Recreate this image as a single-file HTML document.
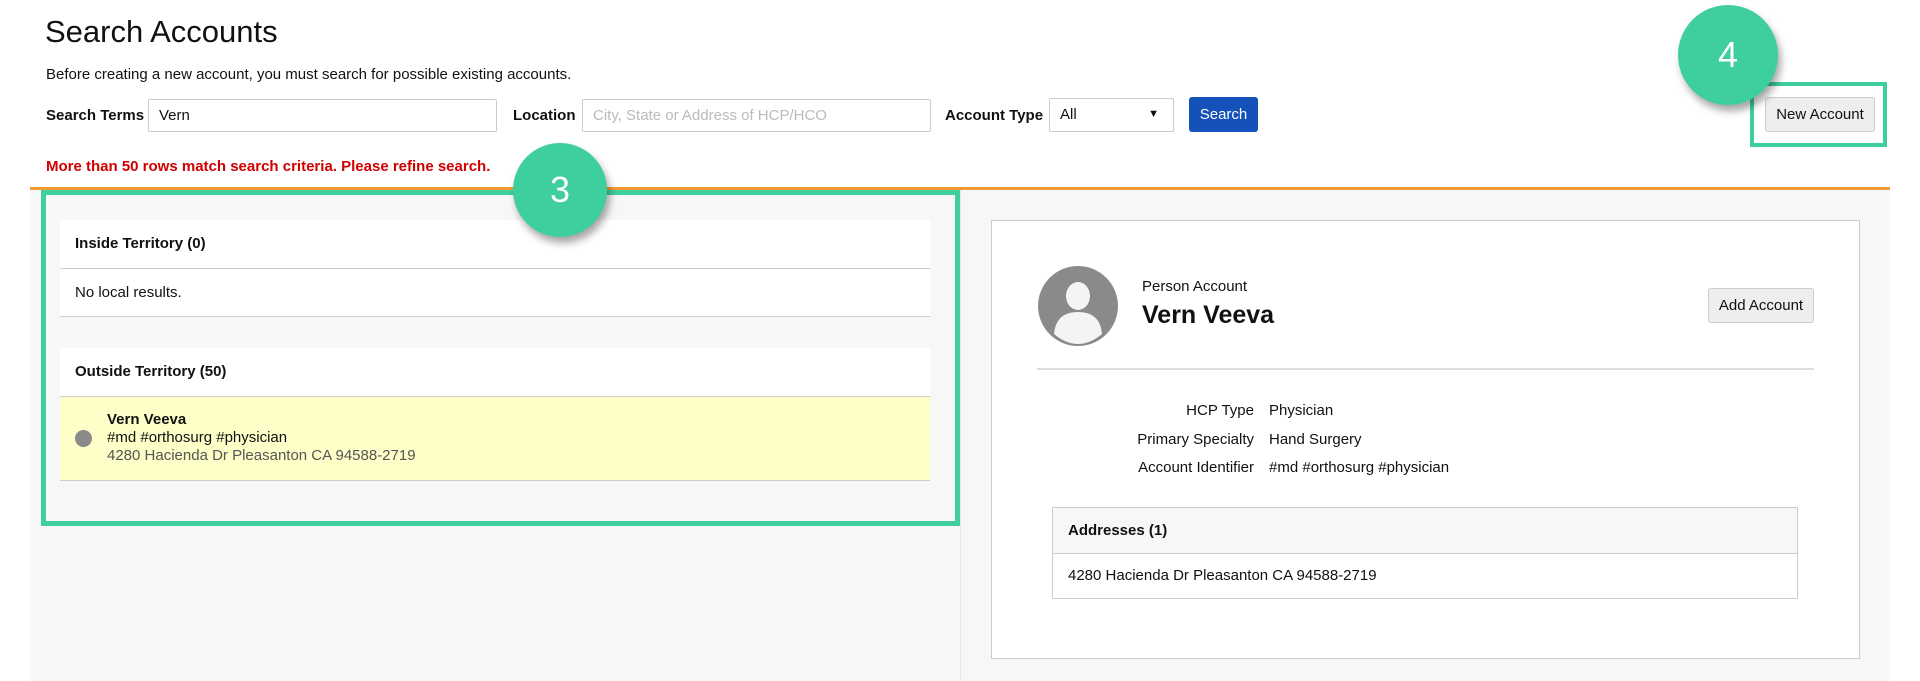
<!DOCTYPE html>
<html><head><style>
*{box-sizing:border-box;margin:0;padding:0}
body{width:1920px;height:681px;background:#fff;font-family:"Liberation Sans",Arial,sans-serif;color:#111;position:relative;overflow:hidden;font-size:15px}
.a{position:absolute}
.lbl{font-weight:bold;font-size:15px;line-height:33px}
.inp{border:1px solid #ccc;border-radius:2px;height:33px;line-height:31px;padding-left:10px;font-size:15px;background:#fff}
.circ{border-radius:50%;background:#3fcf9c;color:#fff;text-align:center;box-shadow:3px 6px 8px rgba(0,0,0,.35);font-size:36px}
.pan{background:#fff}
.row{border-bottom:1px solid #ccc}
</style></head><body>
<div class="a" style="left:45px;top:14px;font-size:31px;line-height:36px">Search Accounts</div>
<div class="a" style="left:46px;top:66px;font-size:15px;line-height:18px">Before creating a new account, you must search for possible existing accounts.</div>
<div class="a lbl" style="left:46px;top:99px">Search Terms</div>
<div class="a inp" style="left:148px;top:99px;width:349px">Vern</div>
<div class="a lbl" style="left:513px;top:99px">Location</div>
<div class="a inp" style="left:582px;top:99px;width:349px;color:#bbb">City, State or Address of HCP/HCO</div>
<div class="a lbl" style="left:945px;top:99px">Account Type</div>
<div class="a inp" style="left:1049px;top:98px;width:125px;height:34px">All<span style="position:absolute;right:14px;top:0;font-size:11px">&#9660;</span></div>
<div class="a" style="left:1189px;top:97px;width:69px;height:35px;background:#1451b8;border-radius:3px;color:#fff;text-align:center;line-height:35px;font-size:15px">Search</div>
<div class="a" style="left:1750px;top:82px;width:137px;height:65px;border:4px solid #3fcf9c"></div>
<div class="a" style="left:1765px;top:97px;width:110px;height:35px;background:#eee;border:1px solid #ccc;border-radius:3px;text-align:center;line-height:33px">New Account</div>
<div class="a circ" style="left:1678px;top:5px;width:100px;height:100px;line-height:100px">4</div>
<div class="a" style="left:46px;top:157px;color:#d00000;font-weight:bold;line-height:20px">More than 50 rows match search criteria. Please refine search.</div>
<div class="a" style="left:30px;top:187px;width:1860px;height:3px;background:#f39a36"></div>
<div class="a" style="left:30px;top:190px;width:1860px;height:491px;background:#f7f7f7"></div>
<div class="a" style="left:960px;top:190px;width:1px;height:491px;background:#e6e6e6"></div>
<div class="a pan" style="left:60px;top:220px;width:870px;height:97px">
 <div class="row" style="height:49px;line-height:48px;padding-left:15px;font-weight:bold">Inside Territory (0)</div>
 <div class="row" style="height:48px;line-height:47px;padding-left:15px">No local results.</div>
</div>
<div class="a pan" style="left:60px;top:348px;width:870px;height:133px">
 <div class="row" style="height:49px;line-height:48px;padding-left:15px;font-weight:bold">Outside Territory (50)</div>
 <div class="row" style="height:84px;background:#fefec8;position:relative">
  <div class="a" style="left:15px;top:33px;width:17px;height:17px;border-radius:50%;background:#8a8a8a"></div>
  <div class="a" style="left:47px;top:14px;line-height:18px"><b>Vern Veeva</b><br>#md #orthosurg #physician<br><span style="color:#555">4280 Hacienda Dr Pleasanton CA 94588-2719</span></div>
 </div>
</div>
<div class="a" style="left:41px;top:190px;width:919px;height:336px;border:5px solid #3fcf9c"></div>
<div class="a circ" style="left:513px;top:143px;width:94px;height:94px;line-height:94px">3</div>
<div class="a" style="left:991px;top:220px;width:869px;height:439px;background:#fff;border:1px solid #ccc"></div>
<svg class="a" style="left:1038px;top:266px" width="80" height="80" viewBox="0 0 80 80"><circle cx="40" cy="40" r="40" fill="#8a8a8a"/><ellipse cx="40" cy="30" rx="12" ry="14" fill="#f4f4f4"/><path d="M16 68 Q18 46 40 46 Q62 46 64 68 Q52 78 40 78 Q28 78 16 68Z" fill="#f4f4f4"/></svg>
<div class="a" style="left:1142px;top:278px;line-height:18px">Person Account</div>
<div class="a" style="left:1142px;top:300px;font-size:25px;font-weight:bold;line-height:30px">Vern Veeva</div>
<div class="a" style="left:1708px;top:288px;width:106px;height:35px;background:#eee;border:1px solid #ccc;border-radius:3px;text-align:center;line-height:33px">Add Account</div>
<div class="a" style="left:1037px;top:368px;width:777px;height:2px;background:#ddd"></div>
<div class="a" style="left:1054px;top:397px;width:200px;text-align:right;line-height:28.5px">HCP Type<br>Primary Specialty<br>Account Identifier</div>
<div class="a" style="left:1269px;top:397px;line-height:28.5px">Physician<br>Hand Surgery<br>#md #orthosurg #physician</div>
<div class="a" style="left:1052px;top:507px;width:746px;height:92px;border:1px solid #ccc;border-bottom:none">
 <div class="row" style="height:46px;background:#f7f7f7;line-height:45px;padding-left:15px;font-weight:bold">Addresses (1)</div>
 <div class="row" style="height:45px;line-height:44px;padding-left:15px">4280 Hacienda Dr Pleasanton CA 94588-2719</div>
</div>
</body></html>
